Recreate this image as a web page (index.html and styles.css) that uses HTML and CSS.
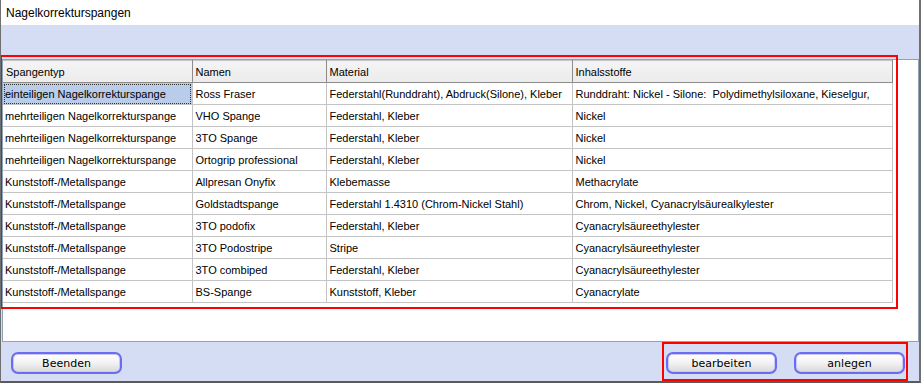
FILE: index.html
```html
<!DOCTYPE html>
<html lang="de">
<head>
    <meta charset="UTF-8">
    <title>Nagelkorrekturspangen</title>
    <link rel="stylesheet" href="styles.css">
</head>
<body>
    <div class="window">
        <div class="titlebar">Nagelkorrekturspangen</div>
        <div class="content">
            <div class="panel">
                <table class="grid">
                    <colgroup>
                        <col class="c1"><col class="c2"><col class="c3"><col class="c4">
                    </colgroup>
                    <thead>
                        <tr><th>Spangentyp</th><th>Namen</th><th>Material</th><th>Inhalsstoffe</th></tr>
                    </thead>
                    <tbody>
                        <tr><td class="selected">einteiligen Nagelkorrekturspange</td><td>Ross Fraser</td><td>Federstahl(Runddraht), Abdruck(Silone), Kleber</td><td>Runddraht: Nickel - Silone:&nbsp; Polydimethylsiloxane, Kieselgur,</td></tr>
                        <tr><td>mehrteiligen Nagelkorrekturspange</td><td>VHO Spange</td><td>Federstahl, Kleber</td><td>Nickel</td></tr>
                        <tr><td>mehrteiligen Nagelkorrekturspange</td><td>3TO Spange</td><td>Federstahl, Kleber</td><td>Nickel</td></tr>
                        <tr><td>mehrteiligen Nagelkorrekturspange</td><td>Ortogrip professional</td><td>Federstahl, Kleber</td><td>Nickel</td></tr>
                        <tr><td>Kunststoff-/Metallspange</td><td>Allpresan Onyfix</td><td>Klebemasse</td><td>Methacrylate</td></tr>
                        <tr><td>Kunststoff-/Metallspange</td><td>Goldstadtspange</td><td>Federstahl 1.4310 (Chrom-Nickel Stahl)</td><td>Chrom, Nickel, Cyanacrylsäurealkylester</td></tr>
                        <tr><td>Kunststoff-/Metallspange</td><td>3TO podofix</td><td>Federstahl, Kleber</td><td>Cyanacrylsäureethylester</td></tr>
                        <tr><td>Kunststoff-/Metallspange</td><td>3TO Podostripe</td><td>Stripe</td><td>Cyanacrylsäureethylester</td></tr>
                        <tr><td>Kunststoff-/Metallspange</td><td>3TO combiped</td><td>Federstahl, Kleber</td><td>Cyanacrylsäureethylester</td></tr>
                        <tr><td>Kunststoff-/Metallspange</td><td>BS-Spange</td><td>Kunststoff, Kleber</td><td>Cyanacrylate</td></tr>
                    </tbody>
                </table>
            </div>
            <div class="buttonbar">
                <button class="btn">Beenden</button>
                <div class="spacer"></div>
                <button class="btn">bearbeiten</button>
                <button class="btn">anlegen</button>
            </div>
        </div>
        <!-- red markings -->
        <div class="mark mark-table"></div>
        <div class="mark mark-buttons"></div>
    </div>
</body>
</html>
```

FILE: styles.css
```css
body {
    margin: 0;
    padding: 0;
    font-family: "Liberation Sans", Arial, sans-serif;
    font-size: 11px;
    color: #000;
    background: #fff;
}
.window {
    position: relative;
    width: 921px;
    height: 383px;
    box-sizing: border-box;
    border-left: 1px solid #6f6f6f;
    border-right: 2px solid #6f6f6f;
    border-bottom: 2px solid #5a5a5a;
    display: flex;
    flex-direction: column;
    overflow: hidden;
}
.titlebar {
    height: 25px;
    line-height: 26px;
    padding-left: 5px;
    font-size: 12px;
    background: #fff;
}
.content {
    flex: 1;
    background: #d4ddf4;
    padding: 34px 0 0 1px;
    display: flex;
    flex-direction: column;
}
.panel {
    height: 283px;
    box-sizing: border-box;
    background: #fff;
    border: 1px solid #8fa3b8;
    border-bottom-color: #9aa0a8;
}
.grid {
    border-collapse: collapse;
    table-layout: fixed;
    width: 889px;
}
.c1 { width: 189px; }
.c2 { width: 134px; }
.c3 { width: 246px; }
.c4 { width: 320px; }
.grid th {
    height: 21px;
    padding: 0 3px;
    text-align: left;
    font-weight: normal;
    background: linear-gradient(#f4f4f4, #ebebeb);
    border-right: 1px solid #8c8c8c;
    border-bottom: 1px solid #8c8c8c;
    border-top: 1px solid #c8c8c8;
    white-space: nowrap;
    overflow: hidden;
}
.grid td {
    height: 21px;
    padding: 0 3px;
    border-right: 1px solid #c4c4c4;
    border-bottom: 1px solid #c4c4c4;
    white-space: nowrap;
    overflow: hidden;
}
.grid td:first-child {
    padding-left: 2px;
}
.grid td.selected {
    background: #b9cce9;
    outline: 1px dotted #333;
    outline-offset: -2px;
}
.buttonbar {
    height: 39px;
    display: flex;
    align-items: flex-start;
    padding: 10px 14px 0 9px;
    box-sizing: border-box;
}
.spacer {
    flex: 1;
}
.btn {
    width: 111px;
    height: 22px;
    margin-left: 17px;
    border: 2px solid #6c6cf2;
    border-radius: 7px;
    background: linear-gradient(#ffffff, #f4f4f4 45%, #d9d9d9);
    font-family: "DejaVu Sans", Verdana, sans-serif;
    font-size: 11px;
    color: #000;
    padding: 0;
    box-shadow: inset 0 0 0 1px #c8c8fa;
}
.btn:first-child {
    margin-left: 0;
}
.mark {
    position: absolute;
    border: 2px solid #ff0000;
    box-sizing: border-box;
    pointer-events: none;
}
.mark-table {
    left: -1px;
    top: 55px;
    width: 898px;
    height: 254px;
}
.mark-buttons {
    left: 661px;
    top: 342px;
    width: 246px;
    height: 39px;
}
```
